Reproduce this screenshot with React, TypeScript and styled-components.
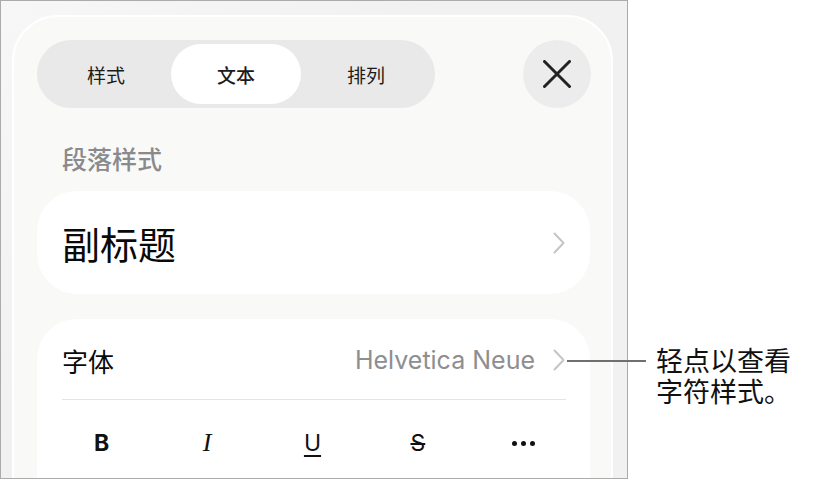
import type {FC} from 'react';
import styled, {createGlobalStyle} from 'styled-components';

const cjk = `"Noto Sans CJK SC", sans-serif`;
const latin = `Inter, "Noto Sans CJK SC", sans-serif`;

const GlobalStyle = createGlobalStyle`
    html, body {
        margin: 0;
        padding: 0;
        background: #fff;
    }
    body {
        width: 819px;
        height: 479px;
        overflow: hidden;
        font-family: ${cjk};
        color: #111;
    }
`;

const tabs = ['样式', '文本', '排列'];

const Chevron: FC = () => <ChevronSvg width="12" height="22" viewBox="0 0 12 22" aria-hidden="true">
    <polyline points="1.5,1.5 10.5,11 1.5,20.5"/>
</ChevronSvg>;

const CloseIcon: FC = () => <svg width="28" height="28" viewBox="0 0 28 28" aria-hidden="true">
    <path d="M1.5 1.5L26.5 26.5M26.5 1.5L1.5 26.5" stroke="#222" strokeWidth="3" strokeLinecap="round" fill="none"/>
</svg>;

export default function App() {
    return <Page>
        <GlobalStyle/>
        <Frame>
            <Panel>
                <Header>
                    <Segmented>
                        {tabs.map(t => <Tab key={t} $active={t === '文本'}>{t}</Tab>)}
                    </Segmented>
                    <CloseButton aria-label="关闭"><CloseIcon/></CloseButton>
                </Header>
                <SectionLabel>段落样式</SectionLabel>
                <StyleCard>
                    <StyleName>副标题</StyleName>
                    <Chevron/>
                </StyleCard>
                <FontCard>
                    <FontRow>
                        <RowLabel>字体</RowLabel>
                        <RowValue>Helvetica Neue</RowValue>
                        <Chevron/>
                    </FontRow>
                    <Divider/>
                    <FormatRow>
                        <FormatButton $kind="bold">B</FormatButton>
                        <FormatButton $kind="italic">I</FormatButton>
                        <FormatButton $kind="underline">U</FormatButton>
                        <FormatButton $kind="strike">S</FormatButton>
                        <Dots><i/><i/><i/></Dots>
                    </FormatRow>
                </FontCard>
            </Panel>
        </Frame>
        <Callout>
            <CalloutLine/>
            <CalloutText>轻点以查看<br/>字符样式。</CalloutText>
        </Callout>
    </Page>;
}

const Page = styled.div`
    position: relative;
    display: flex;
    width: 819px;
    height: 479px;
`;

const Frame = styled.div`
    box-sizing: border-box;
    width: 628px;
    height: 479px;
    display: flex;
    flex-direction: column;
    padding: 14px 14px 0 11px;
    border: 1px solid #ababab;
    background: linear-gradient(135deg, #f7f7f7 0%, #f1f1f1 40%, #f1f1f1 100%);
    overflow: hidden;
`;

const Panel = styled.div`
    flex: 1;
    display: flex;
    flex-direction: column;
    padding: 23px 21px 0 23px;
    margin-bottom: -60px;
    background: #f9f9f8;
    border: 2px solid #fff;
    border-radius: 46px;
`;

const Header = styled.div`
    display: flex;
    align-items: center;
    justify-content: space-between;
    height: 68px;
`;

const Segmented = styled.div`
    display: grid;
    grid-template-columns: repeat(3, 130px);
    padding: 4px;
    width: 398px;
    box-sizing: border-box;
    background: #e9e9e9;
    border-radius: 34px;
`;

const Tab = styled.div<{ $active: boolean }>`
    display: flex;
    align-items: center;
    justify-content: center;
    height: 60px;
    border-radius: 30px;
    font-family: ${cjk};
    font-size: 19px;
    font-weight: ${p => p.$active ? 500 : 400};
    color: #1b1b1b;
    background: ${p => p.$active ? '#fff' : 'transparent'};
`;

const CloseButton = styled.div`
    display: flex;
    align-items: center;
    justify-content: center;
    width: 68px;
    height: 68px;
    margin-right: -1px;
    border-radius: 50%;
    background: #ececec;
`;

const SectionLabel = styled.div`
    margin: 35px 0 0 25px;
    font-family: ${cjk};
    font-size: 25px;
    line-height: 30px;
    font-weight: 500;
    color: #8a8a8d;
`;

const Card = styled.div`
    background: #fff;
    border-radius: 40px;
`;

const StyleCard = styled(Card)`
    display: flex;
    align-items: center;
    justify-content: space-between;
    height: 103px;
    margin-top: 18px;
    padding: 0 25px;
`;

const StyleName = styled.div`
    font-family: ${cjk};
    font-size: 38px;
    line-height: 1;
    color: #0a0a0a;
`;

const ChevronSvg = styled.svg`
    flex: none;
    fill: none;
    stroke: #c5c5c7;
    stroke-width: 2;
    stroke-linecap: round;
    stroke-linejoin: round;
`;

const FontCard = styled(Card)`
    margin-top: 25px;
    padding-bottom: 40px;
`;

const FontRow = styled.div`
    display: flex;
    align-items: center;
    gap: 18px;
    height: 80px;
    padding: 2px 25px 0 25px;
    box-sizing: border-box;
`;

const RowLabel = styled.div`
    flex: 1;
    font-family: ${cjk};
    font-size: 26px;
    color: #0a0a0a;
`;

const RowValue = styled.div`
    font-family: ${latin};
    font-size: 25px;
    color: #8e8e90;
`;

const Divider = styled.div`
    height: 1px;
    margin: 0 24px 0 25px;
    background: #e4e4e4;
`;

const FormatRow = styled.div`
    display: grid;
    grid-template-columns: repeat(5, 1fr);
    align-items: center;
    justify-items: center;
    height: 86px;
    padding: 0 14px 0 12px;
`;

const FormatButton = styled.div<{ $kind: 'bold' | 'italic' | 'underline' | 'strike' }>`
    font-family: ${p => p.$kind === 'italic' ? '"Liberation Serif", serif' : latin};
    font-size: ${p => p.$kind === 'italic' ? '26px' : '23px'};
    font-style: ${p => p.$kind === 'italic' ? 'italic' : 'normal'};
    font-weight: ${p => p.$kind === 'bold' ? 700 : 400};
    color: #111;
    line-height: 1;
    text-decoration: ${p => p.$kind === 'underline' ? 'underline' : p.$kind === 'strike' ? 'line-through' : 'none'};
    text-decoration-thickness: 2px;
    text-underline-offset: 4px;
`;

const Dots = styled.div`
    display: flex;
    gap: 4px;
    i {
        width: 5px;
        height: 5px;
        border-radius: 50%;
        background: #111;
    }
`;

const Callout = styled.div`
    position: absolute;
    left: 567px;
    top: 344px;
    display: flex;
    align-items: flex-start;
    gap: 10px;
`;

const CalloutLine = styled.div`
    width: 79px;
    height: 2px;
    margin-top: 16px;
    background: #6f6f6f;
`;

const CalloutText = styled.div`
    font-family: ${cjk};
    font-size: 27px;
    line-height: 31px;
    color: #111;
`;
